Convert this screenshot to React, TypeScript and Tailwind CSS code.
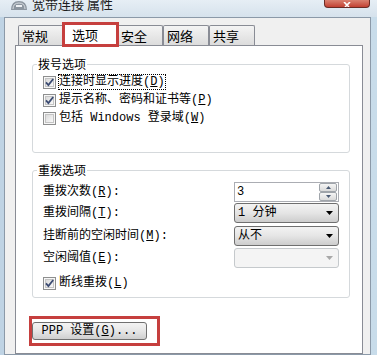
import React from 'react';

const mono = "font-['Liberation_Mono','Noto_Sans_CJK_SC',monospace] text-[12px] leading-[14px] text-black";

function Key({ k }: { k: string }) {
  return (
    <span>
      (<span className="underline underline-offset-1">{k}</span>)
    </span>
  );
}

function Check({ on }: { on: boolean }) {
  return (
    <svg width="13" height="13" viewBox="0 0 13 13" className="shrink-0">
      <defs>
        <linearGradient id="cbg" x1="0" y1="0" x2="1" y2="1">
          <stop offset="0" stopColor="#d8d8d8" />
          <stop offset="1" stopColor="#fbfbfb" />
        </linearGradient>
      </defs>
      <rect x="0.5" y="0.5" width="12" height="12" fill="#f7f7f7" stroke="#8e8f8f" />
      <rect x="2.5" y="2.5" width="8" height="8" fill="url(#cbg)" stroke="#c4c4c4" />
      {on && <path d="M3 6.3 L5.4 9 L10.2 3" stroke="#3b4b72" strokeWidth="1.8" fill="none" />}
    </svg>
  );
}

function Arrow({ color }: { color: string }) {
  return (
    <svg width="7" height="4" viewBox="0 0 7 4">
      <path d="M0 0 H7 L3.5 4 Z" fill={color} />
    </svg>
  );
}

function Combo({ text, disabled }: { text?: React.ReactNode; disabled?: boolean }) {
  if (disabled) {
    return (
      <div className="w-[105px] h-[20px] rounded-[3px] border border-[#c5c9cc] bg-[#f4f4f4] flex items-center justify-end pr-[5px]">
        <Arrow color="#a8a8a8" />
      </div>
    );
  }
  return (
    <div className="w-[105px] h-[20px] rounded-[3px] border border-[#6f6f6f] bg-gradient-to-b from-[#f3f3f3] via-[#e5e5e5] to-[#cdcdcd] flex items-center justify-between pl-[3px] pr-[5px]">
      <span>{text}</span>
      <Arrow color="#000" />
    </div>
  );
}

function SpinBtn({ up }: { up?: boolean }) {
  return (
    <div className="w-[18px] h-[9px] border border-[#9fa4aa] rounded-[2px] bg-gradient-to-b from-[#f5f5f5] to-[#dadada] flex items-center justify-center">
      <svg width="5" height="3" viewBox="0 0 5 3">
        <path d={up ? 'M0 3 H5 L2.5 0 Z' : 'M0 0 H5 L2.5 3 Z'} fill="#4a5a74" />
      </svg>
    </div>
  );
}

function Tab({ label }: { label: string }) {
  return (
    <div className="h-[20px] w-[46px] pl-[3px] border border-b-0 border-[#898c95] rounded-t-[2px] bg-gradient-to-b from-[#f4f4f4] to-[#dcdcdc] flex items-center text-[13px] leading-[16px] font-['Noto_Sans_CJK_SC',sans-serif] text-black">
      {label}
    </div>
  );
}

export default function App() {
  return (
    <div className="w-[377px] h-[355px] overflow-hidden flex flex-col bg-gradient-to-r from-[#bfd3e4] to-[#c8dcea]">
      {/* title bar */}
      <div className="h-[17px] shrink-0 overflow-hidden flex justify-between pl-[10px] pr-[7px] bg-gradient-to-b from-[#e6eef5] to-[#d6e2ec]">
        <div className="flex items-start gap-[4px]">
          <svg width="18" height="10" viewBox="0 0 18 10">
            <path d="M1 10 Q1 1 9 1 Q17 1 17 10 Z" fill="#8c96a0" />
            <path d="M3 9 Q3 3 9 3 Q15 3 15 9" stroke="#d8dde2" strokeWidth="1" fill="none" />
            <rect x="6" y="5" width="6" height="2" fill="#eef1f4" />
          </svg>
          <span className="-mt-[3px] text-[13px] leading-[13px] text-[#1e1e1e] font-['Noto_Sans_CJK_SC',sans-serif]">
            宽带连接 属性
          </span>
        </div>
        <div className="w-[46px] h-[8px] rounded-b-[4px] border border-t-0 border-[#6b2b24] bg-gradient-to-b from-[#d98070] to-[#c23f32] flex items-end justify-center">
          <svg width="10" height="5" viewBox="0 0 10 5">
            <path d="M2 0 L5 3 L8 0 M3 5 L5 3 L7 5" stroke="#fff" strokeWidth="1.6" fill="none" />
          </svg>
        </div>
      </div>

      {/* client area */}
      <div className="flex-1 ml-[4px] mr-[6px] border border-[#8b99a8] bg-[#f0f0f0] pl-[10px] pr-[7px] flex flex-col">
        <div className="h-[27px] shrink-0 flex items-end pl-[3px] relative z-10">
          <Tab label="常规" />
          <div className="h-[25px] w-[57px] -ml-[2px] -mr-[2px] -mb-[2px] pl-[7px] border-[3px] border-[#c63f3e] bg-white flex items-center text-[13px] leading-[16px] font-['Noto_Sans_CJK_SC',sans-serif] text-black relative z-10">
            选项
          </div>
          <Tab label="安全" />
          <Tab label="网络" />
          <Tab label="共享" />
        </div>

        <div className={`flex-1 border border-[#898c95] bg-white flex flex-col ${mono}`}>
          <fieldset className="mt-[11px] ml-[16px] mr-[12px] px-[4px] pb-[25px] border border-[#d5d9dc] rounded-[3px]">
            <legend className="px-[1px] font-['Noto_Sans_CJK_SC',sans-serif]">拨号选项</legend>
            <div className="pl-[6px] pt-[2px] flex flex-col">
              <div className="h-[18px] flex items-center gap-[3px]">
                <Check on />
                <span className="outline outline-1 outline-dotted outline-black">
                  连接时显示进度<Key k="D" />
                </span>
              </div>
              <div className="h-[18px] flex items-center gap-[3px]">
                <Check on />
                <span>
                  提示名称、密码和证书等<Key k="P" />
                </span>
              </div>
              <div className="h-[18px] flex items-center gap-[3px]">
                <Check on={false} />
                <span>
                  包括 Windows 登录域<Key k="W" />
                </span>
              </div>
            </div>
          </fieldset>

          <fieldset className="mt-[10px] ml-[16px] mr-[12px] px-[4px] pb-[6px] border border-[#d5d9dc] rounded-[3px]">
            <legend className="px-[1px] font-['Noto_Sans_CJK_SC',sans-serif]">重拨选项</legend>
            <div className="pl-[6px] pr-[6px] pt-[5px] flex flex-col">
              <div className="h-[20px] flex items-center justify-between">
                <span>
                  重拨次数<Key k="R" />:
                </span>
                <div className="w-[105px] h-[20px] border border-[#abadb3] bg-white flex items-center justify-between pl-[2px] pr-px">
                  <span>3</span>
                  <div className="flex flex-col">
                    <SpinBtn up />
                    <SpinBtn />
                  </div>
                </div>
              </div>
              <div className="mt-[1px] h-[20px] flex items-center justify-between">
                <span>
                  重拨间隔<Key k="T" />:
                </span>
                <Combo text="1 分钟" />
              </div>
              <div className="mt-[3px] h-[20px] flex items-center justify-between">
                <span>
                  挂断前的空闲时间<Key k="M" />:
                </span>
                <Combo text="从不" />
              </div>
              <div className="mt-[2px] h-[20px] flex items-center justify-between">
                <span>
                  空闲阈值<Key k="E" />:
                </span>
                <Combo disabled />
              </div>
              <div className="mt-[7px] h-[16px] flex items-center gap-[3px]">
                <Check on />
                <span>
                  断线重拨<Key k="L" />
                </span>
              </div>
            </div>
          </fieldset>

          <div className="mt-[18px] ml-[13px] w-[131px] h-[30px] border-[3px] border-[#c63f3e] pt-[3px]">
            <button className="w-[115px] h-[18px] rounded-[3px] border border-[#707070] bg-gradient-to-b from-[#f3f3f3] via-[#e6e6e6] to-[#cfcfcf] flex items-center justify-center">
              PPP 设置<Key k="G" />...
            </button>
          </div>
        </div>
      </div>
    </div>
  );
}
